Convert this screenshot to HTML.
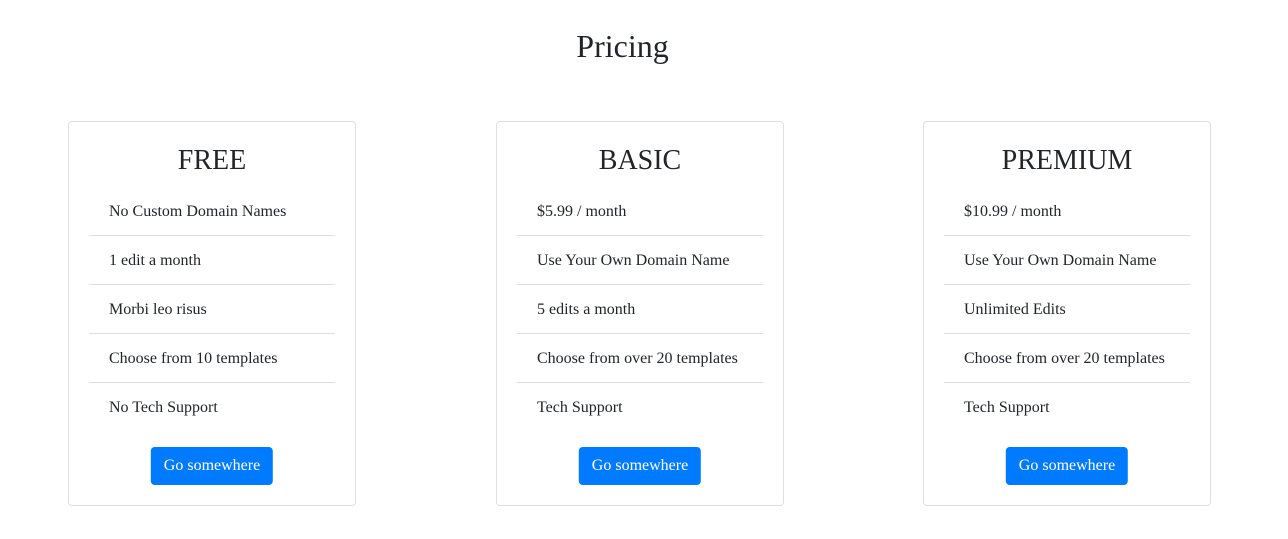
<!DOCTYPE html>
<html><head><meta charset="utf-8"><style>
*{box-sizing:border-box;margin:0;padding:0}
body{width:1288px;height:539px;background:#fff;font-family:"Liberation Serif",serif;color:#212529;position:relative;overflow:hidden}
h1{position:absolute;top:26px;left:0;width:1245px;text-align:center;font-size:32px;font-weight:400;line-height:40px}
.card{position:absolute;top:121px;width:288px;height:385px;border:1px solid rgba(0,0,0,.125);border-radius:4px}
.card h2{position:absolute;top:21px;left:0;width:100%;text-align:center;font-size:28px;font-weight:400;line-height:36px}
ul{position:absolute;top:65px;left:20px;width:246px;list-style:none}
li{height:49px;line-height:48px;padding-left:20px;padding-top:1px;font-size:16px;border-bottom:1px solid rgba(0,0,0,.125)}
li:last-child{border-bottom:none}
.btn{position:absolute;top:325px;left:50%;transform:translateX(-50%);background:#007bff;color:#fff;font-size:16px;height:38px;line-height:38px;padding:0 13px;border-radius:4px;white-space:nowrap}
</style></head><body>
<h1>Pricing</h1>
<div class="card" style="left:68px"><h2>FREE</h2><ul><li>No Custom Domain Names</li><li>1 edit a month</li><li>Morbi leo risus</li><li>Choose from 10 templates</li><li>No Tech Support</li></ul><div class="btn">Go somewhere</div></div>
<div class="card" style="left:496px"><h2>BASIC</h2><ul><li>$5.99 / month</li><li>Use Your Own Domain Name</li><li>5 edits a month</li><li>Choose from over 20 templates</li><li>Tech Support</li></ul><div class="btn">Go somewhere</div></div>
<div class="card" style="left:923px"><h2>PREMIUM</h2><ul><li>$10.99 / month</li><li>Use Your Own Domain Name</li><li>Unlimited Edits</li><li>Choose from over 20 templates</li><li>Tech Support</li></ul><div class="btn">Go somewhere</div></div>
</body></html>
